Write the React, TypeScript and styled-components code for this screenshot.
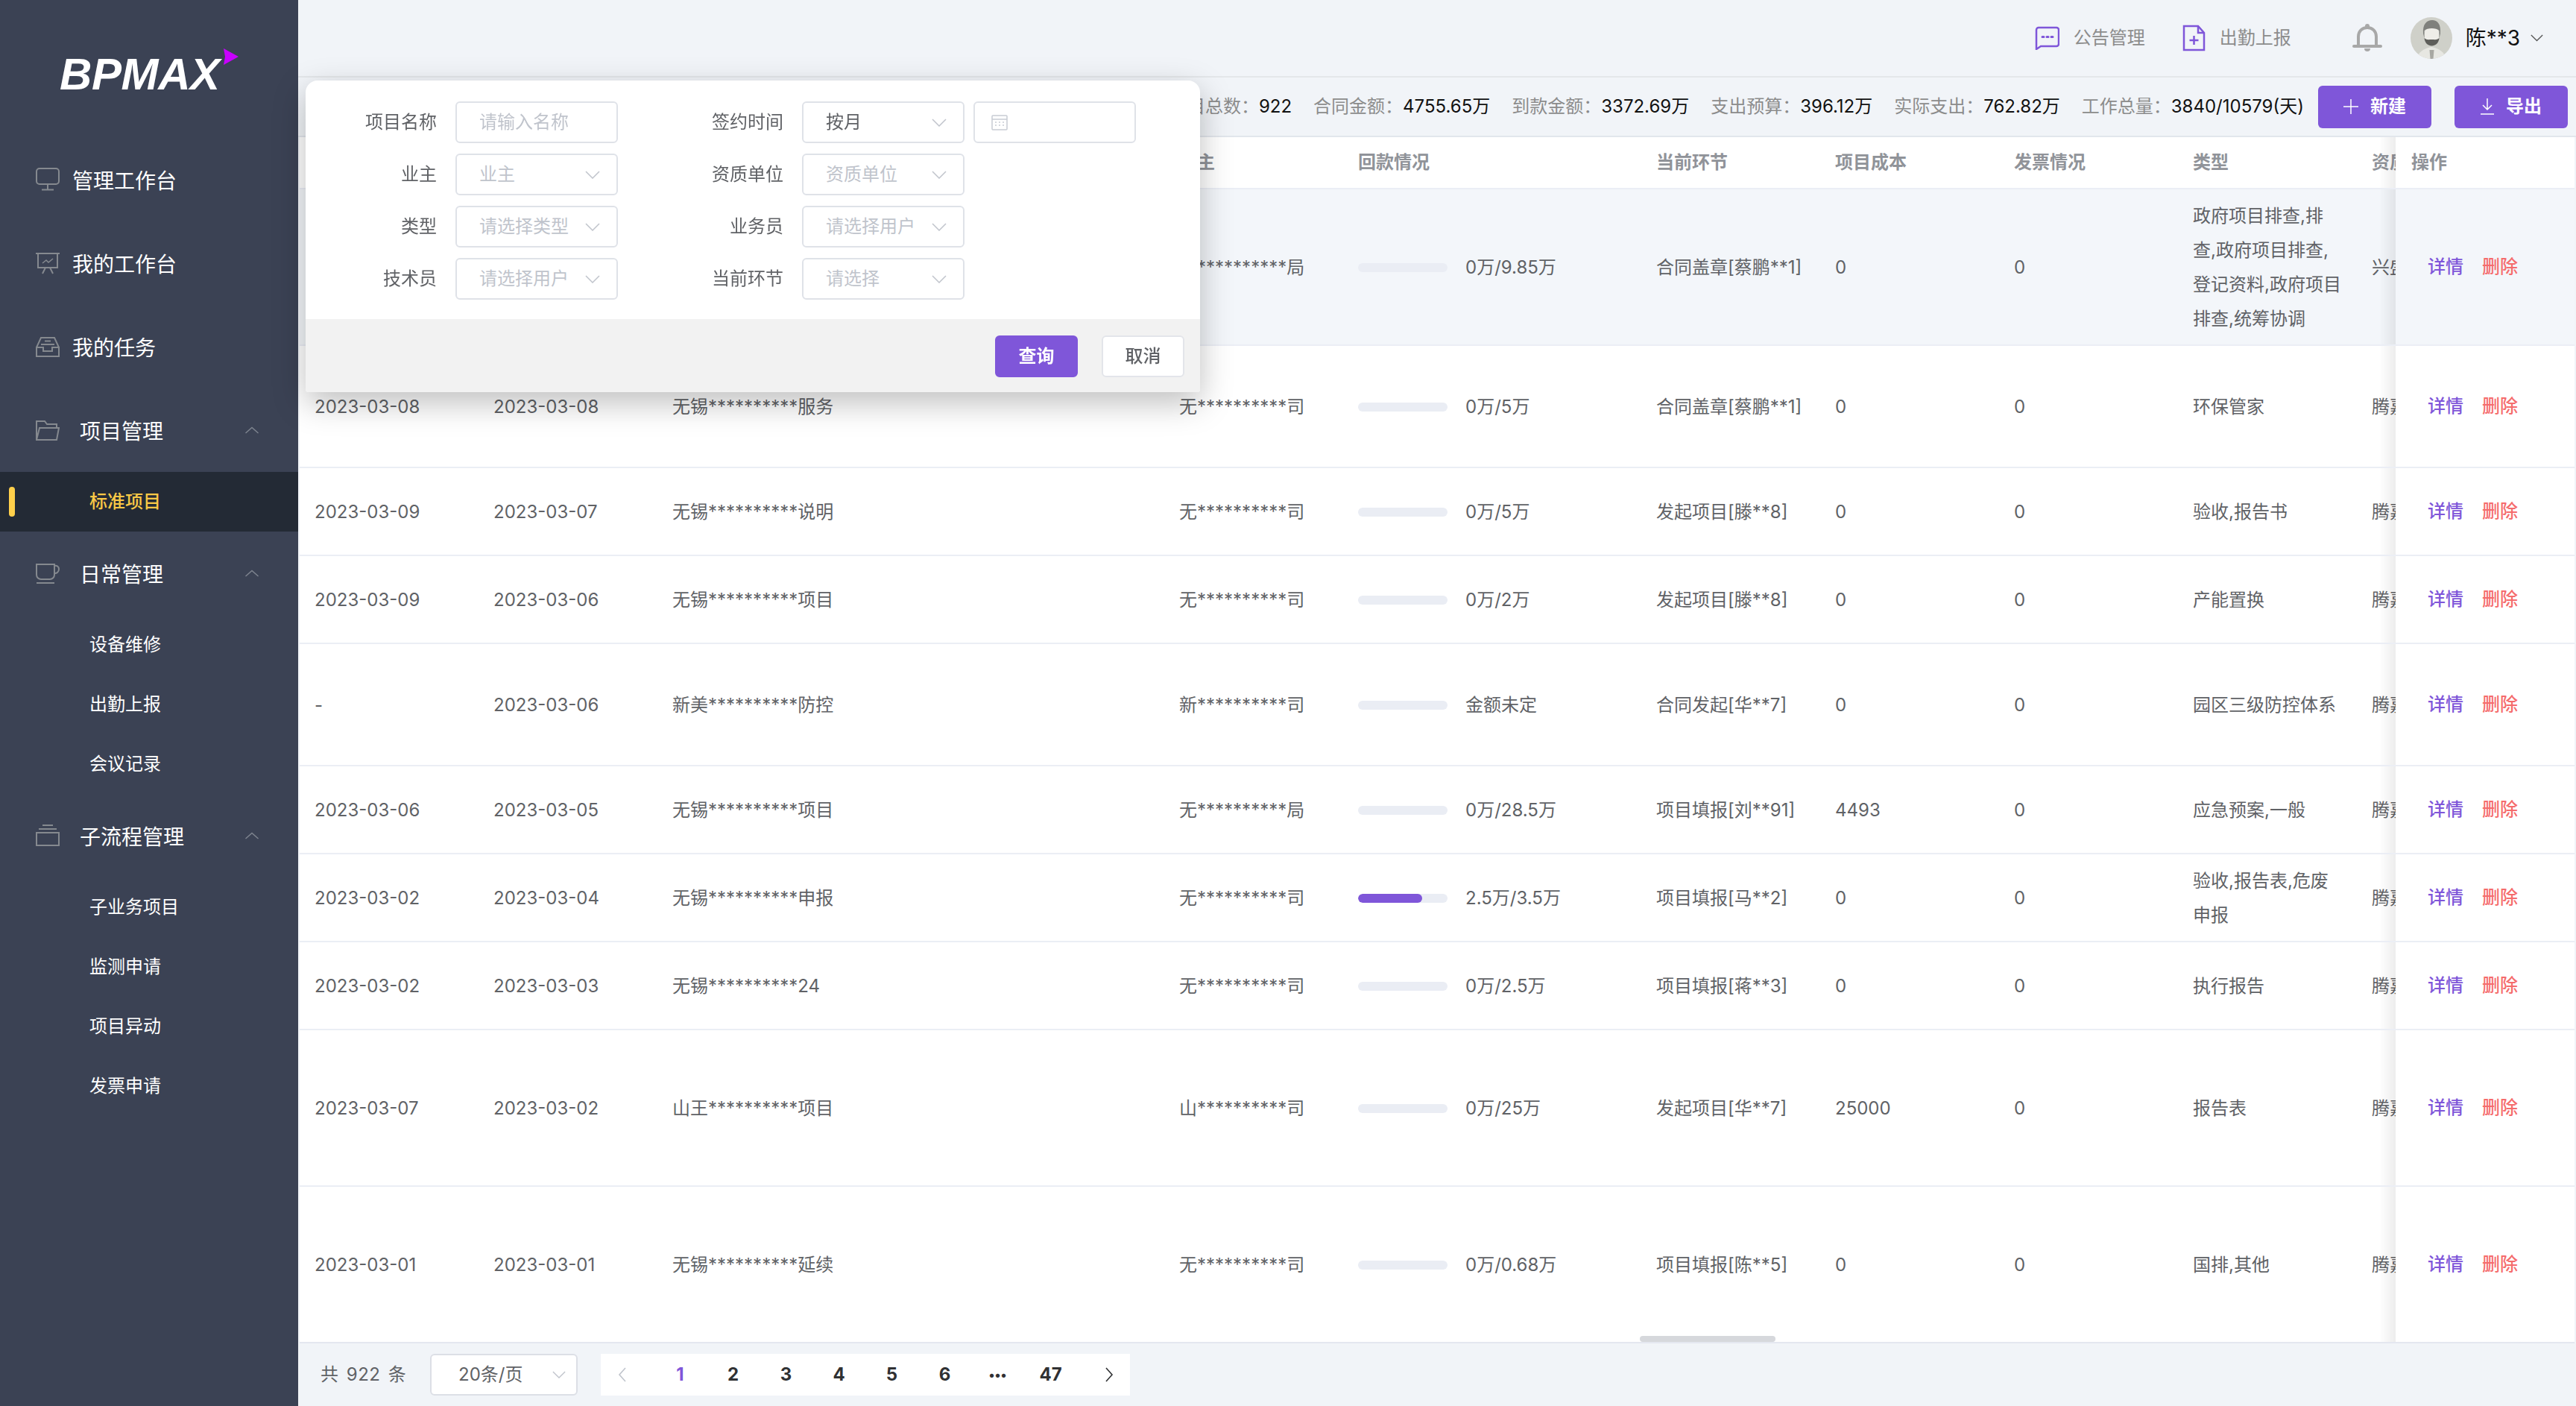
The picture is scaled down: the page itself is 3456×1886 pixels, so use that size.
import React from "react";
import styled, { createGlobalStyle } from "styled-components";

const PURPLE = "#7f56d9";
const FONT = `Inter, "Noto Sans CJK SC", sans-serif`;

const GlobalStyle = createGlobalStyle`
  html, body {
    margin: 0;
    padding: 0;
    background: #f1f4f8;
    font-family: ${FONT};
    font-size: 24px;
    line-height: 36px;
    color: #606266;
  }
  * { box-sizing: border-box; }
`;

const Page = styled.div`
  display: flex;
  width: 100%;
  height: 100vh;
  overflow: hidden;
`;

/* sidebar */

const Sidebar = styled.aside`
  flex: 0 0 400px;
  background: #3b4254;
  color: #fff;
`;

const LogoBox = styled.div`
  height: 185px;
  padding: 65px 0 0 80px;
  display: flex;
  align-items: flex-start;
`;

const LogoText = styled.span`
  font-family: "Liberation Sans", sans-serif;
  font-style: italic;
  font-weight: 700;
  font-size: 60px;
  letter-spacing: -0.4px;
  line-height: 1;
  margin-top: 5px;
  color: #fff;
`;

const MenuItem = styled.div`
  height: 112px;
  display: flex;
  align-items: center;
  padding-left: 48px;
  font-size: 28px;
`;

const MenuIcon = styled.span`
  width: 32px;
  height: 32px;
  margin-right: 17px;
  color: #85898f;
  display: flex;
`;

const MenuLabel = styled.span`
  padding-top: 3px;
`;

const GroupTitle = styled(MenuLabel)`
  margin-left: 10px;
  flex: 1;
`;

const GroupArrow = styled.span`
  width: 18px;
  margin-right: 53px;
  color: #7f8590;
  display: flex;
`;

const SubItem = styled.div<{ $active?: boolean }>`
  position: relative;
  height: 80px;
  line-height: 80px;
  padding-left: 120px;
  font-size: 24px;
  font-weight: ${(props) => (props.$active ? 500 : 400)};
  color: ${(props) => (props.$active ? "#f9c846" : "#fff")};
  background: ${(props) => (props.$active ? "#232a35" : "transparent")};
`;

const ActiveBar = styled.i`
  position: absolute;
  left: 12px;
  top: 20px;
  width: 8px;
  height: 40px;
  border-radius: 4px;
  background: #ffd04b;
`;

/* main */

const Main = styled.main`
  position: relative;
  flex: 1;
  min-width: 0;
  display: flex;
  flex-direction: column;
`;

const Topbar = styled.header`
  flex: 0 0 104px;
  display: flex;
  align-items: center;
  justify-content: flex-end;
  padding-right: 44px;
  border-bottom: 2px solid #e4e7ea;
`;

const TopLink = styled.a`
  display: flex;
  align-items: center;
  margin-right: 50px;
  color: #8c8c8c;
  font-size: 24px;
`;

const TopIcon = styled.span`
  display: flex;
  margin-right: 19px;
  color: ${PURPLE};
`;

const BellBox = styled.span`
  display: flex;
  margin: 0 38px 0 32px;
  color: #a8a8a8;
`;

const UserName = styled.span`
  margin: 0 14px 0 18px;
  font-size: 28px;
  color: #111;
`;

const Toolbar = styled.div`
  flex: 0 0 80px;
  display: flex;
  align-items: center;
  justify-content: flex-end;
  padding: 0 11px 0 0;
  border-bottom: 2px solid #e2e6ec;
  white-space: nowrap;
`;

const Stat = styled.span`
  margin-right: 29px;
  color: #8c8c8c;
  b {
    font-weight: 400;
    color: #111;
  }
`;

const LastStat = styled(Stat)`
  margin-right: 19px;
`;

const ToolButton = styled.button<{ $gap?: number }>`
  width: 152px;
  height: 57px;
  margin-left: ${(props) => props.$gap ?? 0}px;
  display: flex;
  align-items: center;
  justify-content: center;
  gap: 16px;
  border: none;
  border-radius: 6px;
  background: ${PURPLE};
  color: #fff;
  font-family: ${FONT};
  font-size: 24px;
  line-height: 36px;
  font-weight: 600;
`;

/* table */

const TableWrap = styled.div`
  position: relative;
  flex: 1;
  min-height: 0;
  margin: 0 2px;
  overflow: hidden;
  background: #fff;
  border-bottom: 2px solid #e4e7f0;
`;

const Row = styled.div<{ $height: number; $hover?: boolean }>`
  display: grid;
  grid-template-columns: 240px 240px 680px 240px 400px 240px 240px 240px 240px 240px 240px;
  width: 3240px;
  height: ${(props) => props.$height}px;
  border-bottom: 2px solid #ebeef5;
  background: ${(props) => (props.$hover ? "#f3f6fa" : "#fff")};
`;

const Cell = styled.div`
  display: flex;
  align-items: center;
  padding: 2px 20px 0;
  line-height: 46px;
  color: #606266;
  overflow: hidden;
`;

const OneLine = styled.span`
  white-space: nowrap;
`;

const HeadCell = styled(Cell)`
  padding-top: 0;
  font-weight: 700;
  color: #909399;
  white-space: nowrap;
`;

const FixedCell = styled.div<{ $hover?: boolean }>`
  position: sticky;
  right: 0;
  z-index: 2;
  display: flex;
  align-items: center;
  padding-left: 43px;
  gap: 25px;
  background: ${(props) => (props.$hover ? "#f3f6fa" : "#fff")};
  &::before {
    content: "";
    position: absolute;
    top: 0;
    bottom: 0;
    left: -22px;
    width: 22px;
    background: linear-gradient(to left, rgba(0, 0, 0, 0.07), rgba(0, 0, 0, 0));
  }
`;

const FixedHead = styled(FixedCell)`
  padding-left: 21px;
  font-weight: 700;
  color: #909399;
`;

const LinkText = styled.a<{ $danger?: boolean }>`
  font-weight: 500;
  color: ${(props) => (props.$danger ? "#f56c6c" : PURPLE)};
`;

const Progress = styled.div`
  flex: 0 0 120px;
  height: 12px;
  margin-right: 24px;
  border-radius: 6px;
  overflow: hidden;
  background: #eaedf4;
`;

const ProgressFill = styled.div`
  height: 100%;
  border-radius: 6px;
  background: ${PURPLE};
`;

const ScrollThumb = styled.div`
  position: absolute;
  left: 1798px;
  bottom: 0;
  z-index: 3;
  width: 182px;
  height: 8px;
  border-radius: 4px;
  background: #d6d8dc;
`;

/* footer */

const Footer = styled.footer`
  flex: 0 0 84px;
  display: flex;
  align-items: center;
  padding: 0 0 0 30px;
`;

const Total = styled.span`
  width: 147px;
  word-spacing: 3px;
  letter-spacing: 0.5px;
`;

const PageSize = styled.div`
  width: 198px;
  height: 56px;
  display: flex;
  align-items: center;
  justify-content: space-between;
  padding: 0 14px 0 36px;
  border: 2px solid #dcdfe6;
  border-radius: 6px;
  background: #fff;
  margin-right: 31px;
`;

const Pager = styled.div`
  display: flex;
  height: 56px;
  background: #fff;
`;

const PagerItem = styled.span<{ $active?: boolean; $small?: boolean }>`
  width: 71px;
  display: flex;
  align-items: center;
  justify-content: center;
  font-weight: 700;
  font-size: ${(props) => (props.$small ? 17 : 24)}px;
  color: ${(props) => (props.$active ? PURPLE : "#303133")};
`;

const PagerArrow = styled.span<{ $disabled?: boolean; $shift: number }>`
  width: 71px;
  display: flex;
  align-items: center;
  justify-content: center;
  padding-left: ${(props) => (props.$shift > 0 ? props.$shift : 0)}px;
  padding-right: ${(props) => (props.$shift < 0 ? -props.$shift : 0)}px;
  color: ${(props) => (props.$disabled ? "#c0c4cc" : "#303133")};
`;

/* search popup */

const SearchPanel = styled.div`
  position: absolute;
  left: 10px;
  top: 108px;
  z-index: 10;
  width: 1200px;
  height: 418px;
  display: flex;
  flex-direction: column;
  border-radius: 16px 16px 4px 4px;
  background: #fff;
  box-shadow: 0 14px 44px rgba(0, 0, 0, 0.26);
`;

const SearchForm = styled.div`
  flex: 1;
  display: grid;
  grid-template-columns: 419px 1fr;
  grid-auto-rows: 56px;
  row-gap: 14px;
  padding-top: 28px;
`;

const FormItem = styled.div`
  display: flex;
  align-items: center;
`;

const FormLabel = styled.label<{ $width: number }>`
  width: ${(props) => props.$width}px;
  margin-right: 25px;
  text-align: right;
  color: #606266;
`;

const Field = styled.div<{ $filled?: boolean }>`
  position: relative;
  width: 218px;
  height: 56px;
  display: flex;
  align-items: center;
  justify-content: space-between;
  padding: 0 22px 0 30px;
  border: 2px solid #dfe2e8;
  border-radius: 6px;
  background: #fff;
  color: ${(props) => (props.$filled ? "#606266" : "#c0c4cc")};
  white-space: nowrap;
`;

const DateField = styled(Field)`
  margin-left: 12px;
  padding-left: 22px;
`;

const SearchFooter = styled.div`
  flex: 0 0 98px;
  display: flex;
  justify-content: flex-end;
  gap: 32px;
  padding: 22px 21px 0 0;
  background: #f2f2f2;
  border-radius: 0 0 4px 4px;
`;

const FooterButton = styled.button<{ $primary?: boolean }>`
  width: 111px;
  height: 56px;
  border-radius: 6px;
  border: 2px solid ${(props) => (props.$primary ? PURPLE : "#e3e5ea")};
  background: ${(props) => (props.$primary ? PURPLE : "#fff")};
  color: ${(props) => (props.$primary ? "#fff" : "#606266")};
  font-family: ${FONT};
  font-size: 24px;
  line-height: 36px;
  font-weight: ${(props) => (props.$primary ? 600 : 500)};
`;

/* icons */

const MonitorIcon = () => (
  <svg width="32" height="32" viewBox="0 0 32 32" fill="none" stroke="currentColor" strokeWidth="2">
    <rect x="1" y="1" width="30" height="21" rx="4" />
    <path d="M16 22v7M8 29.500h16" />
  </svg>
);

const BoardIcon = () => (
  <svg width="32" height="32" viewBox="0 0 32 32" fill="none" stroke="currentColor" strokeWidth="2">
    <path d="M-1 3h34M3 3v19h26V3M9 30l4-8M23 30l-4-8" />
    <path d="M9 16l5-4 3 3 6-5" strokeWidth="1.600" />
  </svg>
);

const InboxIcon = () => (
  <svg width="32" height="32" viewBox="0 0 32 32" fill="none" stroke="currentColor" strokeWidth="2">
    <path d="M1 17l6-13h18l6 13" />
    <path d="M1 17v12h30V17H22v5H10v-5z" />
    <path d="M7 13h18M12 8.500h8" strokeWidth="1.800" />
  </svg>
);

const FolderIcon = () => (
  <svg width="32" height="32" viewBox="0 0 32 32" fill="none" stroke="currentColor" strokeWidth="2">
    <path d="M1 29V4h11l3 4h13v5" />
    <path d="M1 29l4-16h26l-3 16z" />
  </svg>
);

const CupIcon = () => (
  <svg width="32" height="32" viewBox="0 0 32 32" fill="none" stroke="currentColor" strokeWidth="2">
    <path d="M1 4h24v14a6 6 0 0 1-6 6H7a6 6 0 0 1-6-6z" />
    <path d="M25 6c3-1 6 1 6 4.500s-3 6-6 5.500" />
    <path d="M1 29h24" />
  </svg>
);

const LayersIcon = () => (
  <svg width="32" height="32" viewBox="0 0 32 32" fill="none" stroke="currentColor" strokeWidth="2">
    <path d="M9 2h14M4 7h24" />
    <rect x="1" y="12" width="30" height="17" />
  </svg>
);

const ArrowUp = () => (
  <svg width="18" height="10" viewBox="0 0 18 10" fill="none" stroke="currentColor" strokeWidth="1.400">
    <path d="M0.500 9L9 1.500 17.500 9" />
  </svg>
);

const ArrowDown = ({ color = "#c0c4cc", size = 20 }: { color?: string; size?: number }) => (
  <svg width={size} height={size / 2 + 1} viewBox="0 0 20 11" fill="none" stroke={color} strokeWidth="1.500">
    <path d="M1 1l9 9 9-9" />
  </svg>
);

const ChatIcon = () => (
  <svg width="33" height="32" viewBox="0 0 33 32" fill="none" stroke="currentColor" strokeWidth="2.500">
    <path d="M5 2h24a3 3 0 0 1 3 3v19a3 3 0 0 1-3 3H8l-6 4V5a3 3 0 0 1 3-3z" />
    <path d="M10 14.500h2M16 14.500h2M22 14.500h2" strokeLinecap="round" strokeWidth="3" />
  </svg>
);

const DocIcon = () => (
  <svg width="31" height="36" viewBox="0 0 31 36" fill="none" stroke="currentColor" strokeWidth="2.500">
    <path d="M2 2h19l8 9v23H2z" />
    <path d="M21 2v9h8" />
    <path d="M15.500 15v12M9.500 21h12" />
  </svg>
);

const BellIcon = () => (
  <svg width="40" height="40" viewBox="0 0 40 40" fill="none" stroke="currentColor" strokeWidth="4">
    <path d="M8 30V18c0-7 5-12 12-12s12 5 12 12v12" />
    <path d="M2 31h36" strokeLinecap="round" />
    <circle cx="20" cy="4" r="3" fill="currentColor" stroke="none" />
    <path d="M16 34h8a4 4 0 0 1-8 0z" fill="currentColor" stroke="none" />
  </svg>
);

const Avatar = () => (
  <svg width="56" height="56" viewBox="0 0 56 56">
    <defs>
      <clipPath id="avatar-clip">
        <circle cx="28" cy="28" r="28" />
      </clipPath>
    </defs>
    <g clipPath="url(#avatar-clip)">
      <rect width="56" height="56" fill="#cfd0c9" />
      <path d="M9 53c4-9 13-12 19-13 6 1 15 4 19 13v3H9z" fill="#e7e7e2" />
      <path d="M25.500 44h6l-1 12h-4z" fill="#a8a8a2" />
      <ellipse cx="28.500" cy="24" rx="10" ry="13" fill="#eeede8" />
      <path d="M17 22C16 9 22 4 29 4c7 0 12 5 11 18l-1.500 6V18c-4-4-16-4-20 0v10z" fill="#7f807c" />
      <path d="M18.500 28c3 3 6 2 10 2s7 1 10-2c-.5 7-5.500 10.500-10 10.500S19 35 18.500 28z" fill="#5e5e5a" />
    </g>
  </svg>
);

const PlusIcon = () => (
  <svg width="20" height="20" viewBox="0 0 20 20" stroke="currentColor" strokeWidth="1.500">
    <path d="M10 0v20M0 10h20" />
  </svg>
);

const DownloadIcon = () => (
  <svg width="18" height="22" viewBox="0 0 18 22" fill="none" stroke="currentColor" strokeWidth="1.500">
    <path d="M9 0v15M3 9l6 6 6-6M0 21h18" />
  </svg>
);

const CalendarIcon = () => (
  <svg width="22" height="22" viewBox="0 0 22 22" fill="none" stroke="#c8ccd4" strokeWidth="1.500">
    <rect x="1" y="2" width="20" height="19" rx="1" />
    <path d="M1 7h20M5 11h2M10 11h2M15 11h2M5 15h2M10 15h2M15 15h2" />
  </svg>
);

const ChevronSide = ({ dir }: { dir: "left" | "right" }) => (
  <svg width="12" height="20" viewBox="0 0 12 20" fill="none" stroke="currentColor" strokeWidth="1.600">
    <path d={dir === "left" ? "M10 1L2 10l8 9" : "M2 1l8 9-8 9"} />
  </svg>
);

/* data */

interface ProjectRow {
  height: number;
  paid: string;
  signed: string;
  name: string;
  owner: string;
  percent?: number;
  amount: string;
  step: string;
  cost: string;
  kind: string;
  company: string;
  hover?: boolean;
}

const rows: ProjectRow[] = [
  { height: 210, paid: "", signed: "", name: "", owner: "无**********局", amount: "0万/9.85万", step: "合同盖章[蔡鹏**1]", cost: "0", kind: "政府项目排查,排查,政府项目排查,登记资料,政府项目排查,统筹协调", company: "兴盛", hover: true },
  { height: 164, paid: "2023-03-08", signed: "2023-03-08", name: "无锡**********服务", owner: "无**********司", amount: "0万/5万", step: "合同盖章[蔡鹏**1]", cost: "0", kind: "环保管家", company: "腾嘉" },
  { height: 118, paid: "2023-03-09", signed: "2023-03-07", name: "无锡**********说明", owner: "无**********司", amount: "0万/5万", step: "发起项目[滕**8]", cost: "0", kind: "验收,报告书", company: "腾嘉" },
  { height: 118, paid: "2023-03-09", signed: "2023-03-06", name: "无锡**********项目", owner: "无**********司", amount: "0万/2万", step: "发起项目[滕**8]", cost: "0", kind: "产能置换", company: "腾嘉" },
  { height: 164, paid: "-", signed: "2023-03-06", name: "新美**********防控", owner: "新**********司", amount: "金额未定", step: "合同发起[华**7]", cost: "0", kind: "园区三级防控体系", company: "腾嘉" },
  { height: 118, paid: "2023-03-06", signed: "2023-03-05", name: "无锡**********项目", owner: "无**********局", amount: "0万/28.5万", step: "项目填报[刘**91]", cost: "4493", kind: "应急预案,一般", company: "腾嘉" },
  { height: 118, paid: "2023-03-02", signed: "2023-03-04", name: "无锡**********申报", owner: "无**********司", percent: 71.4, amount: "2.5万/3.5万", step: "项目填报[马**2]", cost: "0", kind: "验收,报告表,危废申报", company: "腾嘉" },
  { height: 118, paid: "2023-03-02", signed: "2023-03-03", name: "无锡**********24", owner: "无**********司", amount: "0万/2.5万", step: "项目填报[蒋**3]", cost: "0", kind: "执行报告", company: "腾嘉" },
  { height: 210, paid: "2023-03-07", signed: "2023-03-02", name: "山王**********项目", owner: "山**********司", amount: "0万/25万", step: "发起项目[华**7]", cost: "25000", kind: "报告表", company: "腾嘉" },
  { height: 210, paid: "2023-03-01", signed: "2023-03-01", name: "无锡**********延续", owner: "无**********司", amount: "0万/0.68万", step: "项目填报[陈**5]", cost: "0", kind: "国排,其他", company: "腾嘉" },
];

const headers = ["", "", "", "业主", "回款情况", "当前环节", "项目成本", "发票情况", "类型", "资质"];

const stats = [
  ["项目总数：", "922"],
  ["合同金额：", "4755.65万"],
  ["到款金额：", "3372.69万"],
  ["支出预算：", "396.12万"],
  ["实际支出：", "762.82万"],
];

const pages = ["1", "2", "3", "4", "5", "6", "•••", "47"];

const App = () => {
  return (
    <Page>
      <GlobalStyle />
      <Sidebar>
        <LogoBox>
          <LogoText>BPMAX</LogoText>
          <svg width="20" height="22" viewBox="0 0 20 22" style={{ marginLeft: 5 }}>
            <path d="M0 0l20 11L0 22l2-11z" fill="#c800ff" />
          </svg>
        </LogoBox>
        <MenuItem>
          <MenuIcon><MonitorIcon /></MenuIcon>
          <MenuLabel>管理工作台</MenuLabel>
        </MenuItem>
        <MenuItem>
          <MenuIcon><BoardIcon /></MenuIcon>
          <MenuLabel>我的工作台</MenuLabel>
        </MenuItem>
        <MenuItem>
          <MenuIcon><InboxIcon /></MenuIcon>
          <MenuLabel>我的任务</MenuLabel>
        </MenuItem>
        <MenuItem>
          <MenuIcon><FolderIcon /></MenuIcon>
          <GroupTitle>项目管理</GroupTitle>
          <GroupArrow><ArrowUp /></GroupArrow>
        </MenuItem>
        <SubItem $active>
          <ActiveBar />
          标准项目
        </SubItem>
        <MenuItem>
          <MenuIcon><CupIcon /></MenuIcon>
          <GroupTitle>日常管理</GroupTitle>
          <GroupArrow><ArrowUp /></GroupArrow>
        </MenuItem>
        <SubItem>设备维修</SubItem>
        <SubItem>出勤上报</SubItem>
        <SubItem>会议记录</SubItem>
        <MenuItem>
          <MenuIcon><LayersIcon /></MenuIcon>
          <GroupTitle>子流程管理</GroupTitle>
          <GroupArrow><ArrowUp /></GroupArrow>
        </MenuItem>
        <SubItem>子业务项目</SubItem>
        <SubItem>监测申请</SubItem>
        <SubItem>项目异动</SubItem>
        <SubItem>发票申请</SubItem>
      </Sidebar>

      <Main>
        <Topbar>
          <TopLink>
            <TopIcon><ChatIcon /></TopIcon>公告管理
          </TopLink>
          <TopLink>
            <TopIcon><DocIcon /></TopIcon>出勤上报
          </TopLink>
          <BellBox><BellIcon /></BellBox>
          <Avatar />
          <UserName>陈**3</UserName>
          <ArrowDown color="#555" size={17} />
        </Topbar>

        <Toolbar>
          {stats.map(([label, value]) => (
            <Stat key={label}>
              {label}
              <b>{value}</b>
            </Stat>
          ))}
          <LastStat>
            工作总量：<b>3840/10579(天)</b>
          </LastStat>
          <ToolButton><PlusIcon />新建</ToolButton>
          <ToolButton $gap={31}><DownloadIcon />导出</ToolButton>
        </Toolbar>

        <TableWrap>
          <Row $height={70}>
            {headers.map((title, index) => (
              <HeadCell key={index}>{title}</HeadCell>
            ))}
            <FixedHead>操作</FixedHead>
          </Row>
          {rows.map((row) => (
            <Row key={row.name + row.signed} $height={row.height} $hover={row.hover}>
              <Cell>{row.paid}</Cell>
              <Cell>{row.signed}</Cell>
              <Cell>{row.name}</Cell>
              <Cell><OneLine>{row.owner}</OneLine></Cell>
              <Cell>
                <Progress>
                  {row.percent ? <ProgressFill style={{ width: `${row.percent}%` }} /> : null}
                </Progress>
                {row.amount}
              </Cell>
              <Cell><OneLine>{row.step}</OneLine></Cell>
              <Cell>{row.cost}</Cell>
              <Cell>0</Cell>
              <Cell>{row.kind}</Cell>
              <Cell><OneLine>{row.company}</OneLine></Cell>
              <FixedCell $hover={row.hover}>
                <LinkText>详情</LinkText>
                <LinkText $danger>删除</LinkText>
              </FixedCell>
            </Row>
          ))}
          <ScrollThumb />
        </TableWrap>

        <Footer>
          <Total>共 922 条</Total>
          <PageSize>
            20条/页
            <ArrowDown size={18} />
          </PageSize>
          <Pager>
            <PagerArrow $disabled $shift={-14}><ChevronSide dir="left" /></PagerArrow>
            {pages.map((item) => (
              <PagerItem key={item} $active={item === "1"} $small={item === "•••"}>{item}</PagerItem>
            ))}
            <PagerArrow $shift={14}><ChevronSide dir="right" /></PagerArrow>
          </Pager>
        </Footer>

        <SearchPanel>
          <SearchForm>
            <FormItem>
              <FormLabel $width={176}>项目名称</FormLabel>
              <Field>请输入名称</Field>
            </FormItem>
            <FormItem>
              <FormLabel $width={222}>签约时间</FormLabel>
              <Field $filled>按月<ArrowDown /></Field>
              <DateField><CalendarIcon /></DateField>
            </FormItem>
            <FormItem>
              <FormLabel $width={176}>业主</FormLabel>
              <Field>业主<ArrowDown /></Field>
            </FormItem>
            <FormItem>
              <FormLabel $width={222}>资质单位</FormLabel>
              <Field>资质单位<ArrowDown /></Field>
            </FormItem>
            <FormItem>
              <FormLabel $width={176}>类型</FormLabel>
              <Field>请选择类型<ArrowDown /></Field>
            </FormItem>
            <FormItem>
              <FormLabel $width={222}>业务员</FormLabel>
              <Field>请选择用户<ArrowDown /></Field>
            </FormItem>
            <FormItem>
              <FormLabel $width={176}>技术员</FormLabel>
              <Field>请选择用户<ArrowDown /></Field>
            </FormItem>
            <FormItem>
              <FormLabel $width={222}>当前环节</FormLabel>
              <Field>请选择<ArrowDown /></Field>
            </FormItem>
          </SearchForm>
          <SearchFooter>
            <FooterButton $primary>查询</FooterButton>
            <FooterButton>取消</FooterButton>
          </SearchFooter>
        </SearchPanel>
      </Main>
    </Page>
  );
};

export default App;
